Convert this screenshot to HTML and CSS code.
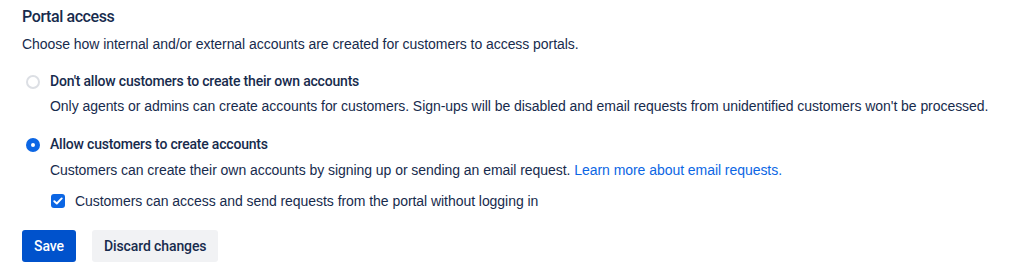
FILE: index.html
```html
<!DOCTYPE html>
<html>
<head>
<meta charset="utf-8">
<link rel="stylesheet" href="styles.css">
</head>
<body>
<div class="page">
  <h2 class="title">Portal access</h2>
  <p class="intro">Choose how internal and/or external accounts are created for customers to access portals.</p>

  <div class="option">
    <span class="radio"></span>
    <div class="option-body">
      <div class="option-label">Don't allow customers to create their own accounts</div>
      <div class="option-desc">Only agents or admins can create accounts for customers. Sign-ups will be disabled and email requests from unidentified customers won't be processed.</div>
    </div>
  </div>

  <div class="option option-second">
    <span class="radio checked"></span>
    <div class="option-body">
      <div class="option-label">Allow customers to create accounts</div>
      <div class="option-desc">Customers can create their own accounts by signing up or sending an email request. <a class="link" href="#">Learn more about email requests.</a></div>
      <label class="check-row">
        <span class="checkbox">
          <svg width="10" height="8" viewBox="0 0 10 8"><path d="M1.3 4.2 L3.8 6.5 L8.7 1.4" fill="none" stroke="#fff" stroke-width="1.9" stroke-linecap="round" stroke-linejoin="round"/></svg>
        </span>
        <span class="check-text">Customers can access and send requests from the portal without logging in</span>
      </label>
    </div>
  </div>

  <div class="actions">
    <button class="btn btn-primary">Save</button>
    <button class="btn btn-subtle">Discard changes</button>
  </div>
</div>
</body>
</html>
```

FILE: styles.css
```css
* { box-sizing: border-box; }
body {
  margin: 0;
  background: #fff;
  font-family: "Segoe UI", "Liberation Sans", Arial, sans-serif;
  color: #172b4d;
  font-size: 14px;
  letter-spacing: -0.05px;
}
.page {
  padding: 7px 0 0 22px;
}
.title {
  margin: 0;
  font-family: Roboto, "Liberation Sans", sans-serif;
  font-size: 16px;
  font-weight: 500;
  line-height: 20px;
  letter-spacing: -0.4px;
  color: #172b4d;
}
.intro {
  margin: 7px 0 0 0;
  line-height: 20px;
}
.option {
  display: flex;
  gap: 10px;
  margin-top: 17px;
  align-items: flex-start;
}
.option-second { margin-top: 18px; }
.radio {
  width: 14px;
  height: 14px;
  margin: 4px 0 0 4px;
  border-radius: 50%;
  border: 2px solid #dcdfe4;
  flex: none;
}
.radio.checked {
  border: none;
  background: #0c66e4;
  display: flex;
  align-items: center;
  justify-content: center;
}
.radio.checked::after {
  content: "";
  width: 4px;
  height: 4px;
  border-radius: 50%;
  background: #fff;
}
.option-label {
  font-family: Roboto, "Liberation Sans", sans-serif;
  font-weight: 500;
  font-size: 14px;
  letter-spacing: -0.2px;
  line-height: 20px;
}
.option-desc {
  margin-top: 5px;
  line-height: 20px;
}
.option-second .option-desc { margin-top: 6px; }
.link {
  color: #0c66e4;
  text-decoration: none;
}
.check-row {
  display: flex;
  align-items: center;
  gap: 10px;
  margin-top: 11px;
}
.checkbox {
  width: 14px;
  height: 14px;
  border-radius: 3px;
  background: #0c66e4;
  display: flex;
  align-items: center;
  justify-content: center;
  margin-left: 1px;
}
.check-text { line-height: 20px; }
.actions {
  display: flex;
  gap: 16px;
  margin-top: 19px;
}
.btn {
  font-family: Roboto, "Liberation Sans", sans-serif;
  font-size: 14px;
  letter-spacing: -0.1px;
  font-weight: 500;
  height: 32px;
  border: none;
  border-radius: 3px;
  padding: 0 12px;
}
.btn-primary {
  background: #0052cc;
  color: #fff;
}
.btn-subtle {
  background: #f1f2f4;
  color: #172b4d;
}
```
